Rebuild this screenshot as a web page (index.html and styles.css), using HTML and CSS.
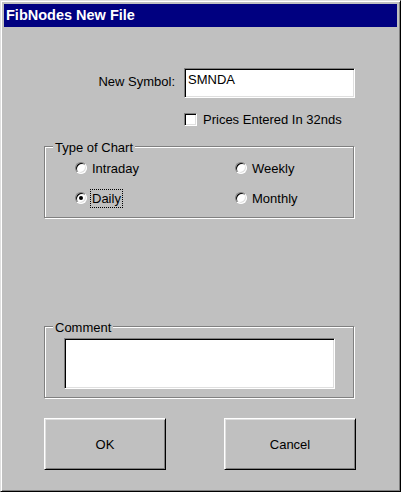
FILE: index.html
```html
<!DOCTYPE html>
<html>
	<head>
		<link rel="stylesheet" href="styles.css">
	</head>
	<body>
		<div class="window">
			<div class="title-bar">FibNodes New File</div>
			<div class="client">
				<div class="symbol-row">
					<label class="symbol-label">New Symbol:</label>
					<div class="field symbol-input">SMNDA</div>
				</div>

				<div class="check-row">
					<span class="checkbox"></span>
					<span class="check-text">Prices Entered In 32nds</span>
				</div>

				<div class="group chart-group">
					<span class="legend">Type of Chart</span>
					<div class="radio-grid">
						<div class="radio-item"><span class="radio"></span><span class="radio-text">Intraday</span></div>
						<div class="radio-item"><span class="radio"></span><span class="radio-text">Weekly</span></div>
						<div class="radio-item"><span class="radio checked"></span><span class="radio-text focused">Daily</span></div>
						<div class="radio-item"><span class="radio"></span><span class="radio-text">Monthly</span></div>
					</div>
				</div>

				<div class="group comment-group">
					<span class="legend">Comment</span>
					<div class="field comment-box"></div>
				</div>

				<div class="button-row">
					<div class="button ok">OK</div>
					<div class="button cancel">Cancel</div>
				</div>
			</div>
		</div>
	</body>
</html>
```

FILE: styles.css
```css
body {
	margin: 0;
}

.window {
	width: 401px;
	height: 492px;
	box-sizing: border-box;
	padding: 3px;
	background-color: #c0c0c0;
	border: 1px solid;
	border-color: #dfdfdf #000 #000 #dfdfdf;
	box-shadow: inset 1px 1px #fff, inset -1px -1px #808080;
	font-family: "Liberation Sans", Arial, sans-serif;
	font-size: 13px;
	color: #000;
}

.title-bar {
	height: 23px;
	line-height: 23px;
	padding-left: 2px;
	background-color: #000080;
	color: #fff;
	font-weight: bold;
	font-size: 14.5px;
}

.client {
	padding-left: 40px;
}

/* sunken white box used by the edit fields */
.field {
	box-sizing: border-box;
	background-color: #fff;
	border: 1px solid;
	border-color: #808080 #fff #fff #808080;
	box-shadow: inset 1px 1px #000, inset -1px -1px #dfdfdf;
}

.symbol-row {
	display: flex;
	justify-content: flex-end;
	width: 311px;
	margin-top: 41px;
}

.symbol-label {
	margin: 6px 9px 0 0;
	line-height: 15px;
}

.symbol-input {
	width: 171px;
	height: 30px;
	padding: 3px 0 0 3px;
	line-height: 15px;
}

.check-row {
	display: flex;
	align-items: center;
	height: 13px;
	margin: 15px 0 0 140px;
}

.checkbox {
	width: 13px;
	height: 13px;
	box-sizing: border-box;
	margin-right: 6px;
	background-color: #fff;
	border: 1px solid;
	border-color: #808080 #fff #fff #808080;
	box-shadow: inset 1px 1px #000, inset -1px -1px #dfdfdf;
}

.check-text {
	line-height: 15px;
}

.group {
	position: relative;
	box-sizing: border-box;
	width: 310px;
	height: 72px;
	border: 1px solid #808080;
	box-shadow: inset 1px 1px #fff, 1px 1px #fff;
}

.legend {
	position: absolute;
	top: -7px;
	left: 8px;
	padding: 0 2px;
	background-color: #c0c0c0;
	line-height: 15px;
}

.chart-group {
	margin-top: 20px;
	padding: 12px 0 0 30px;
}

.radio-grid {
	display: grid;
	grid-template-columns: 160px auto;
	row-gap: 12px;
}

.radio-item {
	display: flex;
	align-items: center;
	height: 18px;
}

.radio {
	display: flex;
	align-items: center;
	justify-content: center;
	width: 12px;
	height: 12px;
	box-sizing: border-box;
	border-radius: 50%;
	background-color: #fff;
	border: 1px solid;
	border-color: #808080 #fff #fff #808080;
	box-shadow: inset 1px 1px #000, inset -1px -1px #dfdfdf;
}

.radio.checked::after {
	content: "";
	width: 4px;
	height: 4px;
	border-radius: 50%;
	background-color: #000;
}

.radio-text {
	margin-left: 5px;
	line-height: 15px;
}

.radio-text.focused {
	margin-left: 3px;
	padding: 1px;
	border: 1px dotted #000;
}

.comment-group {
	margin-top: 108px;
	padding: 11px 0 0 19px;
}

.comment-box {
	width: 271px;
	height: 51px;
}

.button-row {
	display: flex;
	gap: 58px;
	margin-top: 20px;
}

.button {
	display: flex;
	align-items: center;
	justify-content: center;
	box-sizing: border-box;
	height: 52px;
	line-height: 15px;
	border: 1px solid;
	border-color: #fff #000 #000 #fff;
	box-shadow: inset 1px 1px #dfdfdf, inset -1px -1px #808080;
}

.ok {
	width: 122px;
}

.cancel {
	width: 132px;
}
```
